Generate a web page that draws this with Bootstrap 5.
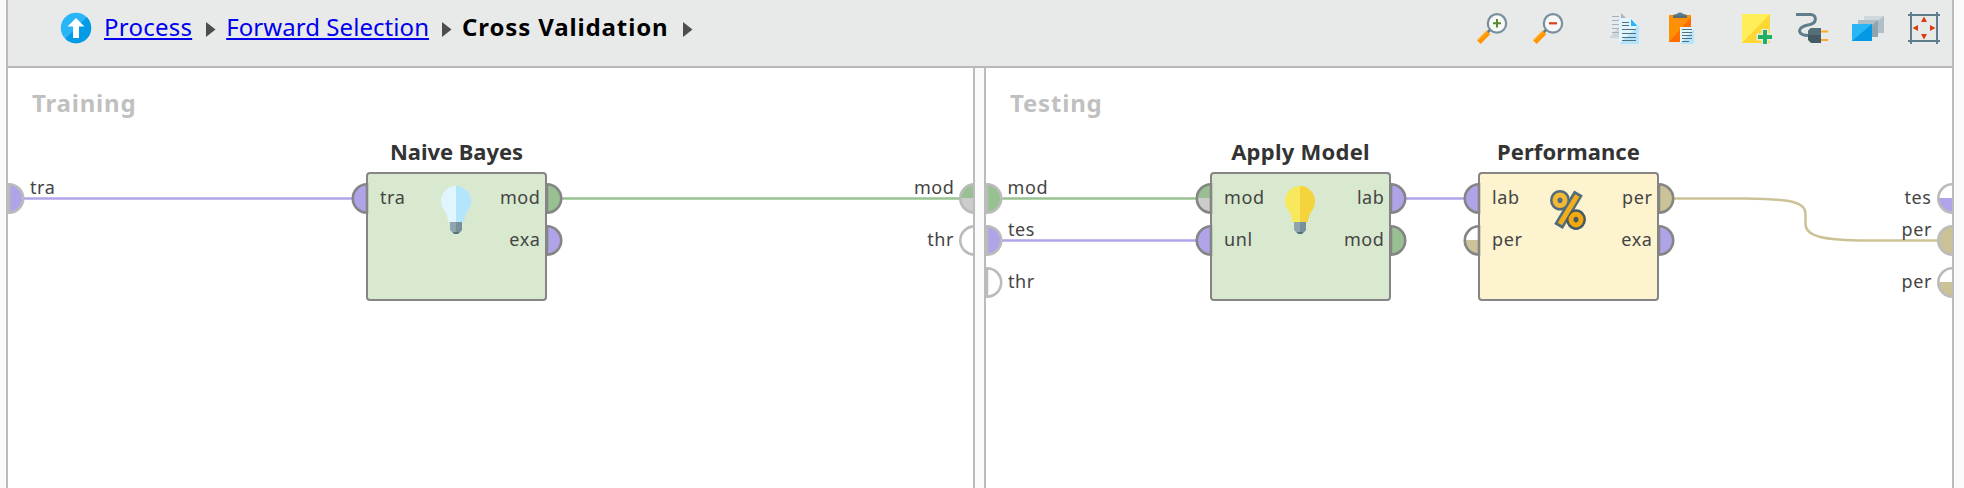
<!DOCTYPE html>
<html lang="en">
<head>
<meta charset="utf-8">
<title>Cross Validation</title>
<link rel="stylesheet" href="https://cdn.jsdelivr.net/npm/bootstrap@5.3.0/dist/css/bootstrap.min.css">
<style>
body{font-family:"Noto Sans",sans-serif;background:#fafafa;color:#3c3c3c}
.process-view{height:488px;margin-left:6px;width:1948px;border-left:2px solid #bbb;border-right:2px solid #bbb}
.topbar{height:68px;background:#e8eaea;border-bottom:2px solid #b9b9b9;padding:0 12px 0 52px}
.crumbs{font-size:24px;line-height:32px;color:#000;height:32px;margin-top:-12px;white-space:nowrap}
.crumbs a{color:#0000ee;text-decoration:underline;text-decoration-thickness:2px;text-underline-offset:2px;text-decoration-skip-ink:none}
.crumb-current{letter-spacing:.87px}
.tools{gap:44px;margin-top:-10px}
.tools>div{gap:24px}
svg{display:block}
.pane{background:#fff;height:420px}
.pane-train{width:965px}
.pane-split{width:13px;border-left:2px solid #bbb;border-right:2px solid #bbb;background:#fafafa}
.pane h2{font-size:24px;font-weight:700;line-height:32px;color:#c0c0c0;letter-spacing:.8px;padding:19px 0 0 24px;margin:0}
.wires{left:0;top:0}
.wires text{font-size:18px;fill:#444;letter-spacing:.6px}
.node{width:181px;height:129px;top:104px;border:2px solid #858585;border-radius:4px;background:#d9e9cf;padding-top:2px;font-size:18px;letter-spacing:.6px;color:#444}
.node.perf{background:#fdf4cf}
.node-title{left:-30px;right:-30px;top:-39px;line-height:32px;font-size:22px;font-weight:700;letter-spacing:-.05px;color:#333;text-align:center}
.node-row{height:42px;line-height:42px;padding:0 4.500px 0 12px}
.node-icon{left:72px;top:10px}
</style>
<script src="https://cdn.jsdelivr.net/npm/bootstrap@5.3.0/dist/js/bootstrap.bundle.min.js"></script>
</head>
<body>
<svg width="0" height="0" class="position-absolute"><defs>
<clipPath id="disc"><circle cx="16" cy="16" r="15.2"/></clipPath>
</defs></svg>
<div class="process-view">
<header class="topbar d-flex align-items-center justify-content-between">
<nav class="crumbs d-flex align-items-center">
<svg width="32" height="32" style="margin-top:2px"><g clip-path="url(#disc)"><path fill="#29b6f6" d="M0 0H32V32H0Z"/><path fill="#039be5" d="M32 0V32H0Z"/></g><path fill="#fff" d="M16 6L24.500 14.500H19V26H13V14.500H7.500Z"/></svg>
<a href="#" style="margin-left:12px;letter-spacing:.24px">Process</a>
<svg width="10" height="16" style="margin-left:14px;margin-top:6px"><path fill="#4d4d4d" d="M0 0L9.500 7.500L0 15Z"/></svg>
<a href="#" style="margin-left:10px;letter-spacing:.06px">Forward Selection</a>
<svg width="10" height="16" style="margin-left:13px;margin-top:6px"><path fill="#4d4d4d" d="M0 0L9.500 7.500L0 15Z"/></svg>
<strong class="crumb-current" style="margin-left:10px">Cross Validation</strong>
<svg width="10" height="16" style="margin-left:14px;margin-top:6px"><path fill="#4d4d4d" d="M0 0L9.500 7.500L0 15Z"/></svg>
</nav>
<div class="tools d-flex">
<div class="d-flex">
<svg width="32" height="32"><path stroke="#607d8b" stroke-width="3" d="M11 21L15 17"/><path stroke="#ff9800" stroke-width="5" d="M2.800 30.200L12.500 20.500"/><path stroke="#ffb030" stroke-width="1.500" d="M2 28L11 19"/><circle cx="21" cy="11.400" r="9.200" fill="#f7f8f8" stroke="#78909c" stroke-width="2.200"/><path stroke="#558b2f" stroke-width="2" d="M17 11.300H25M21 7V15.500"/></svg>
<svg width="32" height="32"><path stroke="#607d8b" stroke-width="3" d="M11 21L15 17"/><path stroke="#ff9800" stroke-width="5" d="M2.800 30.200L12.500 20.500"/><path stroke="#ffb030" stroke-width="1.500" d="M2 28L11 19"/><circle cx="21" cy="11.400" r="9.200" fill="#f7f8f8" stroke="#78909c" stroke-width="2.200"/><path stroke="#d84315" stroke-width="2.200" d="M17 11.300H25"/></svg>
</div>
<div class="d-flex">
<svg width="32" height="32"><path fill="#e8ebee" d="M1 0H13L18 6V26H1Z"/><path fill="#cfd6da" d="M18 7V26H1Z"/><path fill="#a9b6bd" d="M13 1L18 6H13Z"/><path stroke="#a5b0b7" d="M4 4.500H11M4 8.500H11M4 12.500H11M4 16.500H11M4 20.500H11"/><path fill="#e1f5fe" d="M11 6H23L31 14V32H11Z"/><path fill="#b3e5fc" d="M31 13V32H11Z"/><path fill="#29b6f6" d="M23 7L29.500 14H23Z"/><path stroke="#546e7a" stroke-width="1.200" d="M14 10.500H21M14 13.500H21M14 17.500H28M14 21.500H28M14 25.500H28M14 28.500H28"/></svg>
<svg width="32" height="32"><path fill="#ff9100" d="M5 3H27V30H5Z"/><path fill="#ff6d00" d="M27 5V30H5Z"/><path fill="#607d8b" d="M9 6V3L13 1.800Q16 -1 19 1.800L23 3V6Z"/><path fill="#546e7a" d="M9 3.500H23V6H9Z"/><path fill="#e1f5fe" d="M16 15H30V32H16Z"/><path fill="#b3e5fc" d="M30 17V32H16Z"/><path stroke="#546e7a" stroke-width="1.100" d="M18 17.500H28M18 20.500H28M18 23.500H28M18 26.500H28M18 29.500H25"/></svg>
</div>
<div class="d-flex">
<svg width="32" height="32"><path fill="#ffee58" d="M2 2H30V31H2Z"/><path fill="#fdd835" d="M30 2V31H2Z"/><path stroke="#e8eaea" stroke-width="7" d="M16.500 25H32M25 17V32"/><path stroke="#21b060" stroke-width="4" d="M18 25H32M25 18V32"/></svg>
<svg width="32" height="32"><path fill="none" stroke="#607d8b" stroke-width="3" d="M0 2.500H15C21 3 21 11 14 12.500C6 14 3.500 16 3.500 19C4 22 7 23.500 13 23.500"/><path fill="#455a64" d="M12 19L15 16H25V31H15L12 28Z"/><path fill="#546e7a" d="M12 19L15 16H25V23H12Z"/><path stroke="#ffa726" stroke-width="2" d="M25 19.500H32M25 28H32"/></svg>
<svg width="32" height="32"><path fill="#cfd8dc" d="M12 4H32V21H12Z"/><path fill="#b0bec5" d="M32 4V21H12Z"/><path fill="#b0bec5" d="M6 8H26V25H6Z"/><path fill="#90a4ae" d="M26 8V25H6Z"/><path fill="#29b6f6" d="M0 12H20V29H0Z"/><path fill="#0399e5" d="M20 12V29H0Z"/></svg>
<svg width="32" height="32"><path stroke="#607d8b" stroke-width="2" d="M0 3H32M0 29H32M3 0V32M29 0V32"/><path fill="#dd3c10" d="M16 4.500L19 10H13ZM16 27.500L13 22H19ZM4.500 16L10 13V19ZM27.500 16L22 13V19Z"/></svg>
</div>
</div>
</header>
<main class="d-flex">
<section class="pane pane-train position-relative overflow-hidden">
<h2>Training</h2>
<div class="node position-absolute" style="left:358px">
<div class="node-title position-absolute">Naive Bayes</div>
<div class="node-row d-flex justify-content-between"><span>tra</span><span>mod</span></div>
<div class="node-row d-flex justify-content-end"><span>exa</span></div>
<svg class="node-icon position-absolute" width="34" height="50" viewBox="0 -1 34 50"><path fill="#e1f5fe" d="M16 1A15 15 0 0 0 1 16C1 25 8 25 8 37H16Z"/><path fill="#b3e5fc" d="M16 1A15 15 0 0 1 31 16C31 25 24 28 24 37H16Z"/><path fill="#90a4ae" d="M10 37H22V45L18 49H14L10 45Z"/><path fill="#78909c" d="M16 37H22V45L18 49H16Z"/><path fill="#546e7a" d="M12.500 47H19.500L17.500 49H14.500Z"/></svg>
</div>
<svg class="wires position-absolute" width="965" height="420" viewBox="8 68 965 420">
<g stroke-width="2.500"><path stroke="#b1a4ea" d="M22 198.500H352"/><path stroke="#99c292" d="M562 198.500H961"/></g>
<g stroke="#858585" stroke-width="2.600"><path fill="#b1a3e8" d="M367 184.300A14.200 14.200 0 0 0 367 212.700Z"/><path fill="#99c092" d="M547 184.300A14.200 14.200 0 0 1 547 212.700Z"/><path fill="#b1a3e8" d="M547 226.300A14.200 14.200 0 0 1 547 254.700Z"/></g>
<path fill="#99c092" d="M974.500 184V198H960A14 14 0 0 1 974.500 184"/><path fill="#ccc" d="M974.500 198H960A14 14 0 0 0 974.500 213"/>
<g stroke="#bbb" stroke-width="2.600"><path fill="#b1a3e8" d="M9 184.300A14.200 14.200 0 0 1 9 212.700Z"/><circle cx="974.500" cy="198.500" r="14.200" fill="none"/><circle cx="974.500" cy="240.500" r="14.200" fill="#fff"/></g>
<text x="30" y="194">tra</text><text x="954.500" y="194" text-anchor="end">mod</text><text x="954" y="246" text-anchor="end">thr</text>
</svg>
</section>
<div class="pane-split"></div>
<section class="pane flex-grow-1 position-relative overflow-hidden">
<h2>Testing</h2>
<div class="node position-absolute" style="left:224px">
<div class="node-title position-absolute" style="letter-spacing:.25px">Apply Model</div>
<div class="node-row d-flex justify-content-between"><span>mod</span><span>lab</span></div>
<div class="node-row d-flex justify-content-between"><span>unl</span><span>mod</span></div>
<svg class="node-icon position-absolute" width="34" height="50" viewBox="0 -1 34 50"><path fill="#f7e85e" d="M16 1A15 15 0 0 0 1 16C1 25 8 25 8 37H16Z"/><path fill="#f4d33c" d="M16 1A15 15 0 0 1 31 16C31 25 24 28 24 37H16Z"/><path fill="#90a4ae" d="M10 37H22V45L18 49H14L10 45Z"/><path fill="#78909c" d="M16 37H22V45L18 49H16Z"/><path fill="#546e7a" d="M12.500 47H19.500L17.500 49H14.500Z"/></svg>
</div>
<div class="node perf position-absolute" style="left:492px">
<div class="node-title position-absolute" style="letter-spacing:.08px">Performance</div>
<div class="node-row d-flex justify-content-between"><span>lab</span><span>per</span></div>
<div class="node-row d-flex justify-content-between"><span>per</span><span>exa</span></div>
<svg class="node-icon position-absolute" style="left:69px;top:14px" width="38" height="44" viewBox="1549 188 38 44" fill="none"><g stroke="#526d7a" stroke-width="10"><ellipse cx="1560" cy="200.300" rx="5" ry="5.300"/><path d="M1578.500 193L1558.500 226.500"/></g><ellipse cx="1576" cy="219.600" rx="5" ry="5.300" stroke="#455a64" stroke-width="10"/><g stroke="#f2ad1c" stroke-width="5"><ellipse cx="1560" cy="200.300" rx="5" ry="5.300" stroke="#f3b936"/><path d="M1577.300 195.500L1560 224"/><ellipse cx="1576" cy="219.600" rx="5" ry="5.300" stroke="#f2a90c"/></g></svg>
</div>
<svg class="wires position-absolute" width="966" height="420" viewBox="986 68 966 420">
<g stroke-width="2.500" fill="none"><path stroke="#99c292" d="M1001 198.500H1196"/><path stroke="#b1a4ea" d="M1001 240.500H1196M1405 198.500H1464"/><path stroke="#cbc397" d="M1673 198.500H1745C1795 199 1805.500 203 1805.500 214V224C1805.500 236 1822 240.500 1868 240.500H1938"/></g>
<g><path fill="#99c092" d="M1211 184V198H1196A14 14 0 0 1 1211 184"/><path fill="#ccc" d="M1211 198H1196A14 14 0 0 0 1211 213"/><path fill="#fff" d="M1479 226V240H1464A14 14 0 0 1 1479 226"/><path fill="#cbc397" d="M1479 240H1464A14 14 0 0 0 1479 255"/></g>
<g stroke="#858585" stroke-width="2.600"><path fill="none" d="M1211 184.300A14.200 14.200 0 0 0 1211 212.700ZM1479 226.300A14.200 14.200 0 0 0 1479 254.700Z"/><path fill="#b1a3e8" d="M1211 226.300A14.200 14.200 0 0 0 1211 254.700ZM1391 184.300A14.200 14.200 0 0 1 1391 212.700ZM1479 184.300A14.200 14.200 0 0 0 1479 212.700ZM1659 226.300A14.200 14.200 0 0 1 1659 254.700Z"/><path fill="#99c092" d="M1391 226.300A14.200 14.200 0 0 1 1391 254.700Z"/><path fill="#cbc397" d="M1659 184.300A14.200 14.200 0 0 1 1659 212.700Z"/></g>
<g stroke="#bbb" stroke-width="2.600"><path fill="#99c092" d="M987 184.300A14.200 14.200 0 0 1 987 212.700Z"/><path fill="#b1a3e8" d="M987 226.300A14.200 14.200 0 0 1 987 254.700Z"/><path fill="#fff" d="M987 268.300A14.200 14.200 0 0 1 987 296.700Z"/></g>
<path fill="#b1a3e8" d="M1938 198H1953V213A15 15 0 0 1 1938 198"/><circle cx="1952.500" cy="240.500" r="14" fill="#cbc397"/><path fill="#cbc397" d="M1938 282H1953V297A15 15 0 0 1 1938 282"/>
<g stroke="#bbb" stroke-width="2.600" fill="none"><circle cx="1952.500" cy="198.500" r="14.200"/><circle cx="1952.500" cy="240.500" r="14.200"/><circle cx="1952.500" cy="282.500" r="14.200"/></g>
<text x="1007.500" y="194">mod</text><text x="1008" y="236">tes</text><text x="1008" y="288">thr</text>
<g text-anchor="end"><text x="1931.500" y="204">tes</text><text x="1932" y="236">per</text><text x="1932" y="288">per</text></g>
</svg>
</section>
</main>
</div>
</body>
</html>
